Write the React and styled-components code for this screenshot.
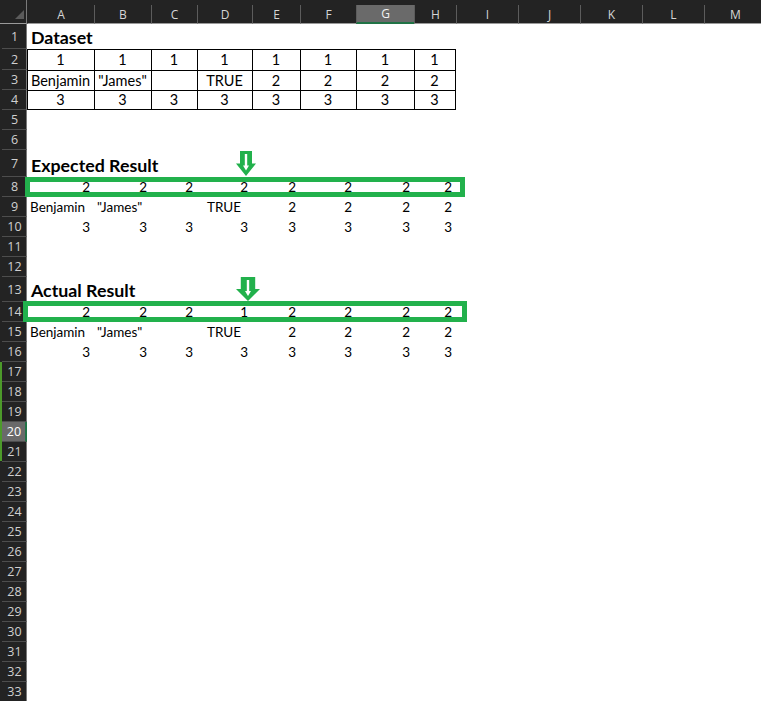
import React from "react";
import styled, { createGlobalStyle } from "styled-components";

const GlobalStyle = createGlobalStyle`
  html, body {
    margin: 0;
    padding: 0;
    background: #fff;
    overflow: hidden;
  }
`;

// column letters and their pixel widths, as in the sheet
const COLS = [
  ["A", 67], ["B", 57], ["C", 46], ["D", 55], ["E", 48], ["F", 56], ["G", 58],
  ["H", 42], ["I", 62], ["J", 62], ["K", 62], ["L", 62], ["M", 62],
];
const ROW_COUNT = 33;
const ROW_HEIGHTS = { 1: 25, 2: 21, 7: 27, 13: 25 };
const SELECTED_COL = "G";
const SELECTED_ROW = 20;

const left = (v) => ({ v, a: "left" });
const num = (v) => ({ v: String(v), a: "right" });
const mid = (v) => ({ v: String(v), a: "center" });

const textRow = [left("Benjamin"), left('"James"'), left(""), mid("TRUE"), num(2), num(2), num(2), num(2)];

const ROWS = {
  1: { heading: "Dataset" },
  2: { boxed: true, cells: [1, 1, 1, 1, 1, 1, 1, 1].map(mid) },
  3: {
    boxed: true,
    cells: [mid("Benjamin"), mid('"James"'), mid(""), mid("TRUE"), mid(2), mid(2), mid(2), mid(2)],
  },
  4: { boxed: true, last: true, cells: [3, 3, 3, 3, 3, 3, 3, 3].map(mid) },
  7: { heading: "Expected Result" },
  8: { cells: [2, 2, 2, 2, 2, 2, 2, 2].map(num) },
  9: { cells: textRow },
  10: { cells: [3, 3, 3, 3, 3, 3, 3, 3].map(num) },
  13: { heading: "Actual Result" },
  14: { cells: [2, 2, 2, 1, 2, 2, 2, 2].map(num) },
  15: { cells: textRow },
  16: { cells: [3, 3, 3, 3, 3, 3, 3, 3].map(num) },
};

const MARKS = [
  { box: [25, 177, 440, 20], arrow: [236, 151, 20, 25] },
  { box: [23, 301, 444, 21], arrow: [236, 277, 24, 24] },
];

const JUSTIFY = { left: "flex-start", center: "center", right: "flex-end" };

const Sheet = styled.div`
  position: relative;
  width: 761px;
  height: 701px;
  overflow: hidden;
  background: #fff;
`;

const Grid = styled.div`
  display: grid;
  grid-template-columns: 27px ${COLS.map((c) => c[1] + "px").join(" ")};
  grid-template-rows: 24px ${Array.from({ length: ROW_COUNT }, (_, i) => (ROW_HEIGHTS[i + 1] || 20) + "px").join(" ")};
`;

const Corner = styled.div`
  background: #232323;
  border-right: 1px solid #7a7a7a;
  border-bottom: 1px solid #9a9a9a;
  display: flex;
  align-items: flex-end;
  justify-content: flex-end;
  padding: 0 2px 4px 0;
  box-sizing: border-box;
`;

const ColHeader = styled.div`
  background: #232323;
  padding-top: 5px;
  display: flex;
  box-sizing: border-box;
`;

const ColLabel = styled.div`
  flex: 1;
  display: flex;
  align-items: center;
  justify-content: center;
  border-left: 1px solid ${(p) => (p.$first ? "transparent" : "#5c5c5c")};
  border-bottom: ${(p) => (p.$selected ? "2px solid #217346" : "1px solid #9a9a9a")};
  background: ${(p) => (p.$selected ? "#6a6a6a" : "transparent")};
  color: ${(p) => (p.$selected ? "#f2f2f2" : "#d6d6d6")};
  font-family: "Open Sans", "Noto Sans", sans-serif;
  font-size: 12px;
`;

const RowHeader = styled.div`
  background: #232323;
  padding-left: 2px;
  display: flex;
`;

const RowLabel = styled.div`
  flex: 1;
  display: flex;
  align-items: center;
  justify-content: center;
  padding-left: 1px;
  border-bottom: 1px solid #4d4d4d;
  border-right: ${(p) => (p.$selected ? "2px solid #217346" : "1px solid #7a7a7a")};
  background: ${(p) => (p.$selected ? "#6a6a6a" : "transparent")};
  color: ${(p) => (p.$selected ? "#ffffff" : "#d0d0d0")};
  font-family: "Open Sans", "Noto Sans", sans-serif;
  font-size: 12.5px;
`;

const Cell = styled.div`
  display: flex;
  align-items: ${(p) => (p.$heading ? "flex-end" : "center")};
  justify-content: ${(p) => JUSTIFY[p.$align || "left"]};
  padding: ${(p) => (p.$heading ? "0 0 1px 4px" : "0 4px 0 3px")};
  min-width: 0;
  white-space: nowrap;
  font-family: Lato, "Liberation Sans", sans-serif;
  font-size: ${(p) => (p.$heading ? 17.8 : p.$boxed ? 14.5 : 13.5)}px;
  font-weight: ${(p) => (p.$heading ? 700 : 400)};
  line-height: 1.2;
  color: #000;
  border-top: ${(p) => (p.$boxed ? "1px solid #000" : "none")};
  border-left: ${(p) => (p.$boxed ? "1px solid #000" : "none")};
  border-right: ${(p) => (p.$endCol ? "1px solid #000" : "none")};
  border-bottom: ${(p) => (p.$endRow ? "1px solid #000" : "none")};
`;

const HighlightBox = styled.div`
  position: absolute;
  left: ${(p) => p.$x}px;
  top: ${(p) => p.$y}px;
  width: ${(p) => p.$w}px;
  height: ${(p) => p.$h}px;
  border: 5px solid #22b14c;
  box-sizing: border-box;
  pointer-events: none;
`;

const ArrowMark = styled.svg`
  position: absolute;
  left: ${(p) => p.$x}px;
  top: ${(p) => p.$y}px;
`;

const SideStrip = styled.div`
  position: absolute;
  left: 0;
  top: 362px;
  width: 2px;
  height: 99px;
  background: #4c9a2a;
`;

const CornerTriangle = () => (
  <svg width="9" height="9" viewBox="0 0 9 9">
    <polygon points="9,0 9,9 0,9" fill="#5b5b5b" />
  </svg>
);

const DownArrow = ({ x, y, w, h }) => {
  const cx = w / 2;
  const shaftW = w * 0.3;
  const headY = h * 0.5;
  return (
    <ArrowMark $x={x} $y={y} width={w} height={h} viewBox={`0 0 ${w} ${h}`}>
      <polygon
        points={`${cx - shaftW},0 ${cx + shaftW},0 ${cx + shaftW},${headY} ${w},${headY} ${cx},${h} 0,${headY} ${cx - shaftW},${headY}`}
        fill="#22b14c"
      />
      <rect x={cx - 1.2} y={3} width={2.4} height={headY + 1} fill="#fff" />
      <polygon
        points={`${cx - 3},${headY + 2} ${cx + 3},${headY + 2} ${cx},${headY + 7}`}
        fill="#fff"
      />
    </ArrowMark>
  );
};

const App = () => {
  const cells = [];
  cells.push(
    <Corner key="corner">
      <CornerTriangle />
    </Corner>
  );
  COLS.forEach(([letter], i) => {
    cells.push(
      <ColHeader key={"h" + letter}>
        <ColLabel $first={i === 0} $selected={letter === SELECTED_COL}>
          {letter}
        </ColLabel>
      </ColHeader>
    );
  });

  for (let r = 1; r <= ROW_COUNT; r++) {
    const row = ROWS[r] || {};
    cells.push(
      <RowHeader key={"r" + r}>
        <RowLabel $selected={r === SELECTED_ROW}>{r}</RowLabel>
      </RowHeader>
    );
    COLS.forEach(([letter], i) => {
      const key = letter + r;
      if (row.heading && i === 0) {
        cells.push(
          <Cell key={key} $heading>
            {row.heading}
          </Cell>
        );
        return;
      }
      const data = row.cells && row.cells[i];
      const boxed = row.boxed && i < 8;
      cells.push(
        <Cell
          key={key}
          $align={data ? data.a : "left"}
          $boxed={boxed}
          $endCol={boxed && i === 7}
          $endRow={boxed && row.last}
        >
          {data ? data.v : ""}
        </Cell>
      );
    });
  }

  return (
    <>
      <GlobalStyle />
      <Sheet>
        <Grid>{cells}</Grid>
        {MARKS.map(({ box, arrow }, i) => (
          <React.Fragment key={i}>
            <HighlightBox $x={box[0]} $y={box[1]} $w={box[2]} $h={box[3]} />
            <DownArrow x={arrow[0]} y={arrow[1]} w={arrow[2]} h={arrow[3]} />
          </React.Fragment>
        ))}
        <SideStrip />
      </Sheet>
    </>
  );
};

export default App;
